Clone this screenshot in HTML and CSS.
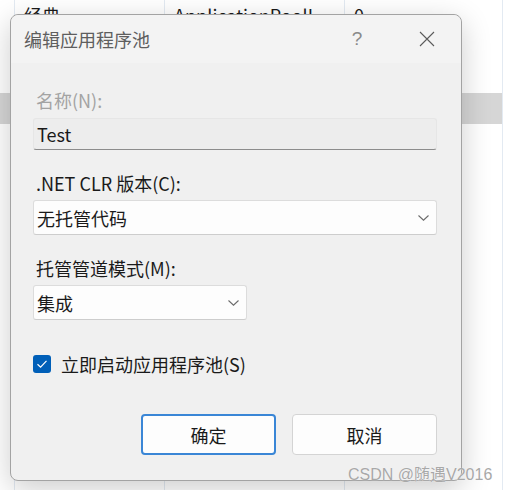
FILE: index.html
```html
<!DOCTYPE html>
<html lang="zh-CN">
<head>
    <meta charset="UTF-8">
    <title>编辑应用程序池</title>
    <link rel="stylesheet" href="styles.css">
</head>
<body>
    <div class="pool-list">
        <div class="row">
            <div class="cell"></div>
            <div class="cell">经典</div>
            <div class="cell">ApplicationPoolI</div>
            <div class="cell">0</div>
        </div>
        <div class="row"><div class="cell"></div><div class="cell"></div><div class="cell"></div><div class="cell"></div></div>
        <div class="row"><div class="cell"></div><div class="cell"></div><div class="cell"></div><div class="cell"></div></div>
        <div class="row selected"><div class="cell"></div><div class="cell"></div><div class="cell"></div><div class="cell"></div></div>
        <div class="row"><div class="cell"></div><div class="cell"></div><div class="cell"></div><div class="cell"></div></div>
        <div class="row"><div class="cell"></div><div class="cell"></div><div class="cell"></div><div class="cell"></div></div>
        <div class="row"><div class="cell"></div><div class="cell"></div><div class="cell"></div><div class="cell"></div></div>
        <div class="row"><div class="cell"></div><div class="cell"></div><div class="cell"></div><div class="cell"></div></div>
        <div class="row"><div class="cell"></div><div class="cell"></div><div class="cell"></div><div class="cell"></div></div>
        <div class="row"><div class="cell"></div><div class="cell"></div><div class="cell"></div><div class="cell"></div></div>
        <div class="row"><div class="cell"></div><div class="cell"></div><div class="cell"></div><div class="cell"></div></div>
        <div class="row"><div class="cell"></div><div class="cell"></div><div class="cell"></div><div class="cell"></div></div>
        <div class="row"><div class="cell"></div><div class="cell"></div><div class="cell"></div><div class="cell"></div></div>
        <div class="row"><div class="cell"></div><div class="cell"></div><div class="cell"></div><div class="cell"></div></div>
        <div class="row"><div class="cell"></div><div class="cell"></div><div class="cell"></div><div class="cell"></div></div>
        <div class="row"><div class="cell"></div><div class="cell"></div><div class="cell"></div><div class="cell"></div></div>
    </div>

    <div class="dialog">
        <div class="titlebar">
            <div class="title">编辑应用程序池</div>
            <div class="title-btn help">?</div>
            <div class="title-btn close">
                <svg width="16" height="16" viewBox="0 0 16 16">
                    <path d="M1 1 L15 15 M15 1 L1 15" stroke="#5a5a5a" stroke-width="1.1" fill="none"/>
                </svg>
            </div>
        </div>

        <div class="dialog-body">
            <div class="label disabled">名称(N):</div>
            <div class="textbox">Test</div>

            <div class="label label-gap">.NET CLR 版本(C):</div>
            <div class="select">
                <span>无托管代码</span>
                <svg class="chevron" width="11" height="6" viewBox="0 0 11 6">
                    <path d="M0.5 0.5 L5.5 5.2 L10.5 0.5" stroke="#6b6b6b" stroke-width="1.1" fill="none"/>
                </svg>
            </div>

            <div class="label label-gap">托管管道模式(M):</div>
            <div class="select short">
                <span>集成</span>
                <svg class="chevron" width="11" height="6" viewBox="0 0 11 6">
                    <path d="M0.5 0.5 L5.5 5.2 L10.5 0.5" stroke="#6b6b6b" stroke-width="1.1" fill="none"/>
                </svg>
            </div>

            <div class="check-row">
                <div class="checkbox">
                    <svg width="12" height="10" viewBox="0 0 12 10">
                        <path d="M1.5 5.2 L4.6 8.2 L10.5 1.8" stroke="#ffffff" stroke-width="1.2" fill="none"/>
                    </svg>
                </div>
                <span>立即启动应用程序池(S)</span>
            </div>

            <div class="buttons">
                <button class="btn primary">确定</button>
                <button class="btn cancel">取消</button>
            </div>
        </div>
    </div>

    <div class="watermark">CSDN @随遇V2016</div>
</body>
</html>
```

FILE: styles.css
```css
body {
    margin: 0;
    width: 510px;
    height: 490px;
    overflow: hidden;
    background: #ffffff;
    font-family: "Noto Sans CJK SC", "Noto Sans", sans-serif;
    color: #1a1a1a;
    position: relative;
}

/* list behind the dialog */
.pool-list {
    width: 502px;
    border-right: 1px solid #e3eaf2;
}

.row {
    display: grid;
    grid-template-columns: 14px 150px 180px 158px;
    height: 31px;
}

.row.selected {
    background: #d6d6d6;
}

.cell {
    border-left: 1px solid #e3eaf2;
    padding-left: 9px;
    font-size: 18px;
    line-height: 31px;
    white-space: nowrap;
    overflow: hidden;
}

.cell:first-child {
    border-left: none;
}

/* dialog */
.dialog {
    position: absolute;
    left: 10px;
    top: 14px;
    width: 452px;
    height: 467px;
    box-sizing: border-box;
    border: 1px solid #a3a3a3;
    border-radius: 8px;
    background: #f0f0f0;
    box-shadow: 0 8px 30px rgba(0, 0, 0, 0.2);
}

.titlebar {
    display: flex;
    align-items: center;
    height: 48px;
    padding-left: 13px;
    background: #f3f3f3;
    border-radius: 8px 8px 0 0;
}

.title {
    flex: 1;
    font-size: 18px;
    color: #5e5e5e;
}

.title-btn {
    width: 46px;
    display: flex;
    justify-content: center;
    align-items: center;
}

.help {
    font-family: "Liberation Sans", sans-serif;
    font-size: 19px;
    color: #8a8a8a;
    margin-right: 24px;
}

.close {
    margin-right: 11px;
}

.dialog-body {
    padding: 25px 24px 0 22px;
}

.label {
    font-size: 18px;
    line-height: 24px;
    color: #1a1a1a;
    padding-left: 3px;
    margin-bottom: 6px;
}

.label.disabled {
    color: #a3a3a3;
}

.label-gap {
    margin-top: 21px;
    margin-bottom: 5px;
}

.textbox {
    height: 32px;
    box-sizing: border-box;
    border: 1px solid #e6e6e6;
    border-bottom: 1px solid #8c8c8c;
    border-radius: 3px;
    background: #ededed;
    padding-left: 3px;
    font-size: 18px;
    line-height: 30px;
}

.select {
    height: 35px;
    box-sizing: border-box;
    border: 1px solid #dcdcdc;
    border-bottom-color: #cdcdcd;
    border-radius: 3px;
    background: #fdfdfd;
    display: flex;
    align-items: center;
    justify-content: space-between;
    padding: 0 7px 0 3px;
    font-size: 18px;
}

.select.short {
    width: 214px;
}

.check-row {
    display: flex;
    align-items: center;
    gap: 10px;
    height: 18px;
    margin-top: 35px;
    font-size: 18px;
    line-height: 18px;
}

.checkbox {
    width: 18px;
    height: 18px;
    border-radius: 3px;
    background: #005fb8;
    display: flex;
    align-items: center;
    justify-content: center;
}

.buttons {
    display: flex;
    justify-content: flex-end;
    gap: 16px;
    margin-top: 41px;
}

.btn {
    height: 41px;
    background: #fdfdfd;
    border-radius: 4px;
    font-family: "Noto Sans CJK SC", sans-serif;
    font-size: 18px;
    color: #1a1a1a;
    padding: 0;
}

.btn.primary {
    width: 135px;
    border: 2px solid #3a86d6;
}

.btn.cancel {
    width: 145px;
    border: 1px solid #d4d4d4;
}

.watermark {
    position: absolute;
    left: 348px;
    top: 461px;
    font-family: "Liberation Sans", "Noto Sans CJK SC", sans-serif;
    font-size: 16px;
    color: #a8a8a8;
    text-shadow: 0 0 1px #ffffff;
}
```
